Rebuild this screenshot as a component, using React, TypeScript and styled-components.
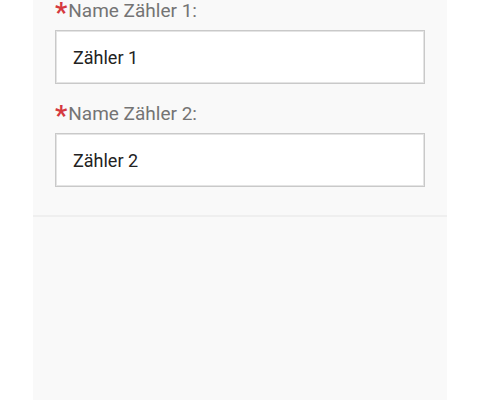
import React from "react";
import styled, { createGlobalStyle } from "styled-components";

const Global = createGlobalStyle`
  html, body { margin: 0; padding: 0; background: #ffffff; }
  body { font-family: Roboto, "Liberation Sans", Arial, sans-serif; }
  #root { height: 400px; }
`;

const Page = styled.div`
  height: 400px;
  display: flex;
  justify-content: flex-start;
  padding-left: 33px;
  box-sizing: border-box;
  overflow: hidden;
`;

const Panel = styled.div`
  width: 414px;
  height: 100%;
  background: #f9f9f9;
  display: flex;
  flex-direction: column;
`;

const Form = styled.div`
  display: flex;
  flex-direction: column;
  padding: 0 22px 28px 22px;
  border-bottom: 2px solid #efefef;
`;

const Field = styled.div<{ $first?: boolean }>`
  display: flex;
  flex-direction: column;
  margin-top: ${(p) => (p.$first ? "0" : "19px")};
`;

const Label = styled.label`
  font-size: 19px;
  line-height: 21px;
  color: #747474;
  white-space: nowrap;
`;

const Star = styled.span`
  color: #d5393f;
  font-size: 27px;
  font-weight: 700;
  line-height: 0;
  vertical-align: -5px;
  margin-right: 1px;
`;

const Input = styled.input`
  margin-top: 9px;
  width: 370px;
  height: 54px;
  box-sizing: border-box;
  border: 1px solid #c9c9c9;
  box-shadow: 0 0 0 1px #e4e4e4 inset;
  background: #ffffff;
  padding: 0 16px 0 17px;
  font-family: Roboto, "Liberation Sans", Arial, sans-serif;
  font-size: 18px;
  color: #222222;
  outline: none;
`;

export default function App() {
  return (
    <>
      <Global />
      <Page>
        <Panel>
          <Form>
            <Field $first>
              <Label>
                <Star>*</Star>Name Zähler 1:
              </Label>
              <Input defaultValue="Zähler 1" />
            </Field>
            <Field>
              <Label>
                <Star>*</Star>Name Zähler 2:
              </Label>
              <Input defaultValue="Zähler 2" />
            </Field>
          </Form>
        </Panel>
      </Page>
    </>
  );
}
